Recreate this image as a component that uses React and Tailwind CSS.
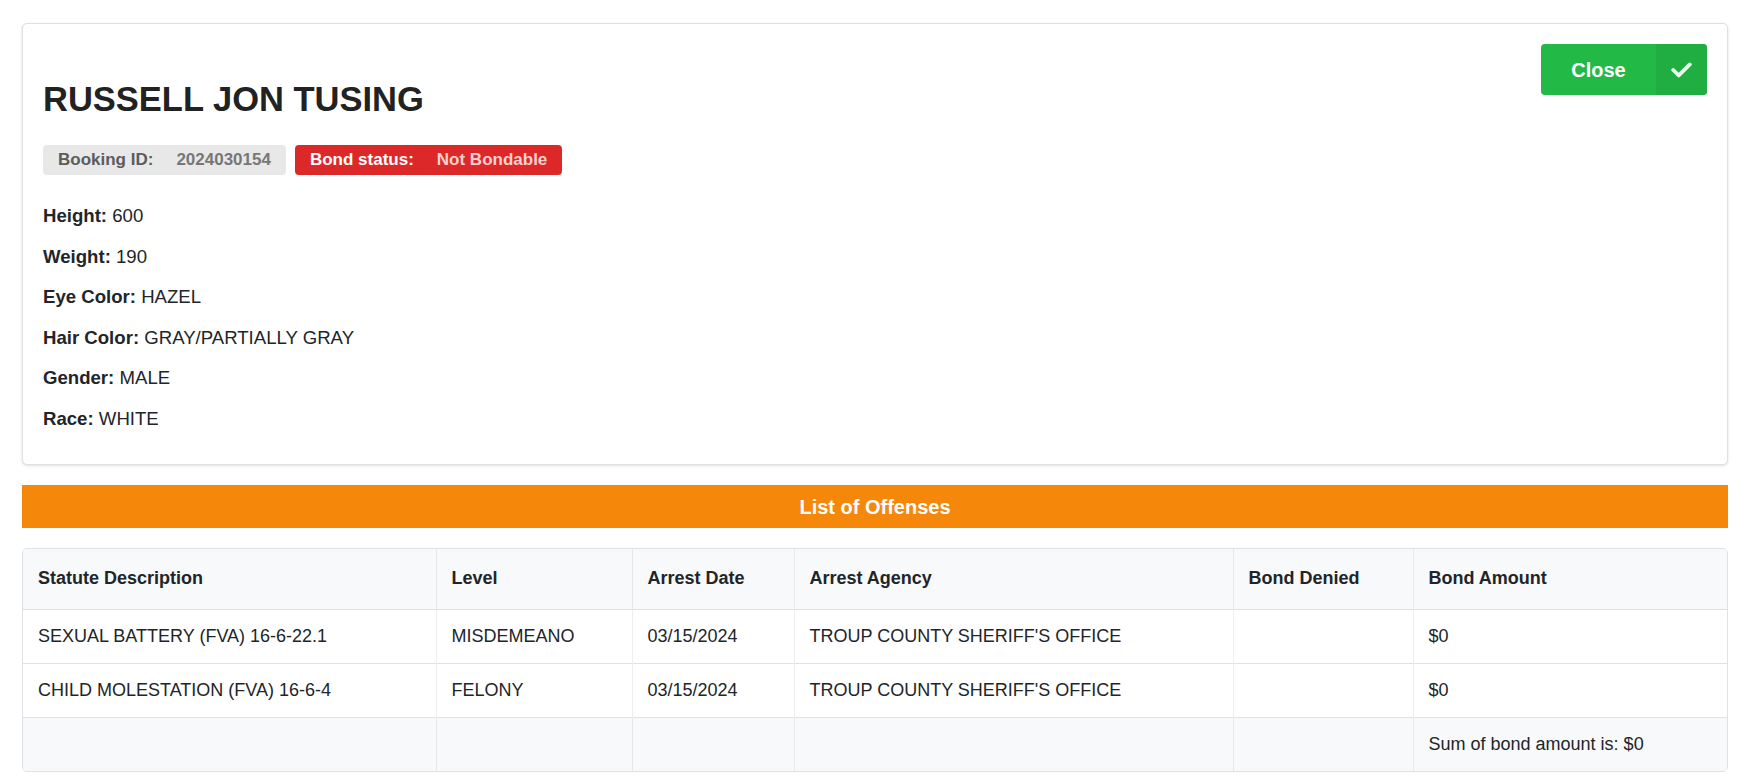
import React from 'react';

const details = [
  { label: 'Height', value: '600' },
  { label: 'Weight', value: '190' },
  { label: 'Eye Color', value: 'HAZEL' },
  { label: 'Hair Color', value: 'GRAY/PARTIALLY GRAY' },
  { label: 'Gender', value: 'MALE' },
  { label: 'Race', value: 'WHITE' },
];

const offenses = [
  {
    statute: 'SEXUAL BATTERY (FVA) 16-6-22.1',
    level: 'MISDEMEANO',
    date: '03/15/2024',
    agency: "TROUP COUNTY SHERIFF'S OFFICE",
    denied: '',
    amount: '$0',
  },
  {
    statute: 'CHILD MOLESTATION (FVA) 16-6-4',
    level: 'FELONY',
    date: '03/15/2024',
    agency: "TROUP COUNTY SHERIFF'S OFFICE",
    denied: '',
    amount: '$0',
  },
];

const columns = [
  { title: 'Statute Description', width: 'w-[413px]' },
  { title: 'Level', width: 'w-[196px]' },
  { title: 'Arrest Date', width: 'w-[162px]' },
  { title: 'Arrest Agency', width: 'w-[439px]' },
  { title: 'Bond Denied', width: 'w-[180px]' },
  { title: 'Bond Amount', width: 'w-auto' },
];

function CheckIcon() {
  return (
    <svg width="21" height="16" viewBox="0 0 21 16" fill="none">
      <path
        d="M2.2 8 L7.8 13.4 L18.8 2.4"
        stroke="white"
        strokeOpacity="0.92"
        strokeWidth="3.8"
        strokeLinecap="round"
        strokeLinejoin="round"
      />
    </svg>
  );
}

export default function App() {
  const total = offenses.reduce((sum, o) => sum + Number(o.amount.replace('$', '')), 0);

  return (
    <div className="min-h-screen bg-white pl-[22px] pr-[30px] pt-[23px] pb-[10px] text-[#212529] font-['Liberation_Sans',Arial,sans-serif]">
      {/* Inmate card */}
      <div className="rounded-[5px] border border-[#dfdfdf] bg-white px-[20px] pt-[20px] pb-[19px] shadow-[0_1px_3px_rgba(0,0,0,0.12)]">
        <div className="flex justify-between">
          <div>
            <h1 className="mt-[35px] text-[34.5px] font-bold leading-[41px] text-[#222222]">
              RUSSELL JON TUSING
            </h1>
            <div className="mt-[25px] flex gap-[9px]">
              <span className="flex h-[30px] items-center gap-[23px] rounded-[4px] bg-[#e8e8e8] px-[15px] text-[17px] font-bold">
                <span className="text-[#5c5c5c]">Booking ID:</span>
                <span className="text-[#777777]">2024030154</span>
              </span>
              <span className="flex h-[30px] items-center gap-[23px] rounded-[4px] bg-[#dc2828] px-[15px] text-[17px] font-bold">
                <span className="text-white">Bond status:</span>
                <span className="text-[#fbd0d0]">Not Bondable</span>
              </span>
            </div>
          </div>
          <button className="flex h-[51px] w-[166px] overflow-hidden rounded-[4px] bg-[#22b946] text-white">
            <span className="flex flex-1 items-center justify-center text-[20px] font-bold">Close</span>
            <span className="flex w-[51px] items-center justify-center bg-[#20ae43]">
              <CheckIcon />
            </span>
          </button>
        </div>

        <div className="mt-[27px] text-[18.6px]">
          {details.map((d) => (
            <p key={d.label} className="mb-[13.5px] leading-[27px]">
              <span className="font-bold">{d.label}:</span> {d.value}
            </p>
          ))}
        </div>
      </div>

      {/* Offenses header */}
      <div className="mt-[20px] flex h-[43px] items-center justify-center bg-[#f5880a] text-[20px] font-bold text-white">
        List of Offenses
      </div>

      {/* Offenses table */}
      <div className="mt-[20px] overflow-hidden rounded-[5px] border border-[#dee2e6]">
        <table className="w-full table-fixed border-collapse text-left text-[18px]">
          <colgroup>
            {columns.map((c) => (
              <col key={c.title} className={c.width} />
            ))}
          </colgroup>
          <thead className="bg-[#f8f9fa]">
            <tr className="h-[60px] border-b border-[#dee2e6]">
              {columns.map((c, i) => (
                <th
                  key={c.title}
                  className={`px-[15px] font-bold ${i > 0 ? 'border-l border-[#e6e8ea]' : ''}`}
                >
                  {c.title}
                </th>
              ))}
            </tr>
          </thead>
          <tbody>
            {offenses.map((o, r) => (
              <tr key={r} className="h-[54px] border-b border-[#dee2e6] bg-white">
                <td className="px-[15px]">{o.statute}</td>
                <td className="border-l border-[#eceeef] px-[15px]">{o.level}</td>
                <td className="border-l border-[#eceeef] px-[15px]">{o.date}</td>
                <td className="border-l border-[#eceeef] px-[15px]">{o.agency}</td>
                <td className="border-l border-[#eceeef] px-[15px]">{o.denied}</td>
                <td className="border-l border-[#eceeef] px-[15px]">{o.amount}</td>
              </tr>
            ))}
            <tr className="h-[54px] bg-[#f8f9fa]">
              <td className="px-[15px]"></td>
              <td className="border-l border-[#e6e8ea] px-[15px]"></td>
              <td className="border-l border-[#e6e8ea] px-[15px]"></td>
              <td className="border-l border-[#e6e8ea] px-[15px]"></td>
              <td className="border-l border-[#e6e8ea] px-[15px]"></td>
              <td className="border-l border-[#e6e8ea] px-[15px]">Sum of bond amount is: ${total}</td>
            </tr>
          </tbody>
        </table>
      </div>
    </div>
  );
}
